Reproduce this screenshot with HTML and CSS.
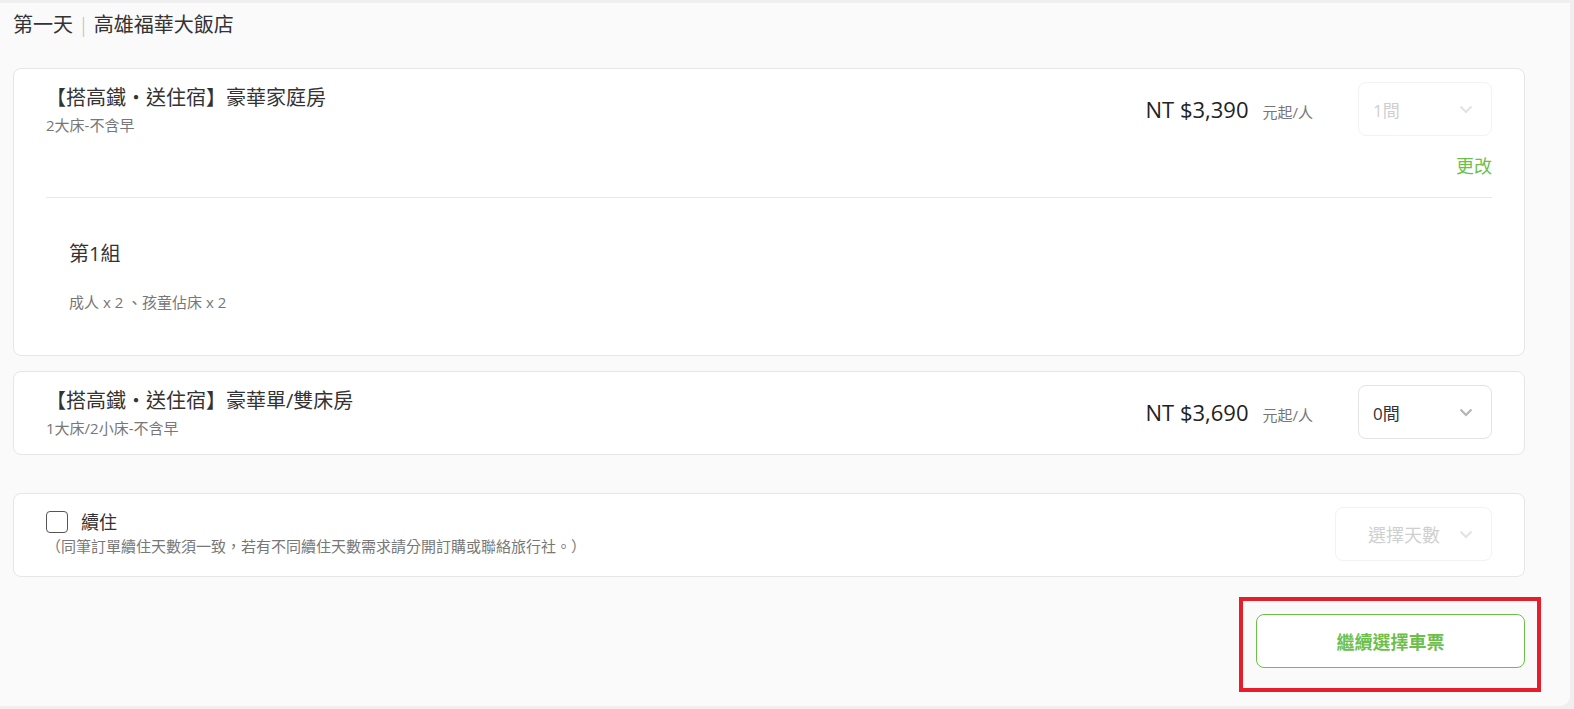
FILE: index.html
```html
<!DOCTYPE html>
<html lang="zh-Hant">
<head>
  <meta charset="UTF-8">
  <title>選擇住宿</title>
  <link rel="stylesheet" href="styles.css">
</head>
<body>

  <div class="panel">
    <!-- 標題 -->
    <h2 class="day-title">第一天<span class="sep">|</span>高雄福華大飯店</h2>

    <!-- 房型 1 -->
    <div class="card">
      <div class="room-row">
        <div class="room-info">
          <div class="room-name">【搭高鐵・送住宿】豪華家庭房</div>
          <div class="room-sub">2大床-不含早</div>
        </div>
        <div class="room-side">
          <span class="price">NT $3,390</span>
          <span class="unit">元起/人</span>
          <div class="select disabled">
            <span>1間</span>
            <svg class="chev" width="14" height="9" viewBox="0 0 14 9"><polyline points="1.5,1.5 7,7 12.5,1.5" fill="none" stroke="currentColor" stroke-width="2.2"/></svg>
          </div>
        </div>
      </div>
      <div class="change"><a href="#">更改</a></div>
      <hr class="divider">
      <div class="group">
        <div class="group-name">第1組</div>
        <div class="group-people">成人 x 2 、孩童佔床 x 2</div>
      </div>
    </div>

    <!-- 房型 2 -->
    <div class="card">
      <div class="room-row">
        <div class="room-info">
          <div class="room-name">【搭高鐵・送住宿】豪華單/雙床房</div>
          <div class="room-sub">1大床/2小床-不含早</div>
        </div>
        <div class="room-side">
          <span class="price">NT $3,690</span>
          <span class="unit">元起/人</span>
          <div class="select">
            <span>0間</span>
            <svg class="chev" width="14" height="9" viewBox="0 0 14 9"><polyline points="1.5,1.5 7,7 12.5,1.5" fill="none" stroke="currentColor" stroke-width="2.2"/></svg>
          </div>
        </div>
      </div>
    </div>

    <!-- 續住 -->
    <div class="card card-extend">
      <div class="room-row">
        <div class="room-info">
          <label class="check">
            <span class="box"></span>
            <span>續住</span>
          </label>
          <div class="note">（同筆訂單續住天數須一致，若有不同續住天數需求請分開訂購或聯絡旅行社。）</div>
        </div>
        <div class="select select-days disabled">
          <span>選擇天數</span>
          <svg class="chev" width="14" height="9" viewBox="0 0 14 9"><polyline points="1.5,1.5 7,7 12.5,1.5" fill="none" stroke="currentColor" stroke-width="2.2"/></svg>
        </div>
      </div>
    </div>

    <div class="actions">
      <div class="highlight">
        <button class="btn-next">繼續選擇車票</button>
      </div>
    </div>
  </div>

</body>
</html>
```

FILE: styles.css
```css
html, body {
  margin: 0;
  padding: 0;
  overflow: hidden;
}

body {
  background-color: #efefef;
  font-family: "Open Sans", "Noto Sans CJK TC", sans-serif;
  color: #333;
  padding-top: 3px;
}

.panel {
  margin-right: 4px;
  height: 703px;
  box-sizing: border-box;
  padding: 10px 45px 0 13px;
  background: #fafafa;
  border-radius: 0 0 10px 0;
}

.day-title {
  margin: 0 0 31px;
  font-size: 20px;
  font-weight: normal;
  line-height: 24px;
  color: #333;
}

.sep {
  color: #bbb;
  margin: 0 5px;
  font-weight: 300;
}

.card {
  background: #fff;
  border: 1px solid #e6e6e6;
  border-radius: 8px;
  padding: 13px 32px 15px 32px;
  margin-bottom: 15px;
}

.room-row {
  display: flex;
  justify-content: space-between;
  align-items: flex-start;
}

.room-info {
  padding-top: 3px;
}

.room-name {
  font-size: 20px;
  line-height: 26px;
}

.room-sub {
  font-size: 15px;
  line-height: 20px;
  color: #777;
  margin-top: 4px;
}

.room-side {
  display: flex;
  align-items: center;
}

.price {
  font-size: 22px;
  color: #222;
}

.unit {
  font-size: 15px;
  color: #777;
  margin-left: 14px;
  margin-right: 45px;
  padding-top: 4px;
}

.select {
  width: 134px;
  height: 54px;
  box-sizing: border-box;
  border: 1px solid #e3e3e3;
  border-radius: 8px;
  display: flex;
  align-items: center;
  justify-content: space-between;
  padding: 0 18px 0 14px;
  font-size: 17px;
  color: #333;
  background: #fff;
}

.select .chev {
  color: #b5b5b5;
}

.select.disabled {
  border-color: #f2f2f2;
  color: #cfcfcf;
}

.select.disabled .chev {
  color: #e3e3e3;
}

.change {
  text-align: right;
  margin-top: 19px;
  font-size: 18px;
  line-height: 22px;
}

.change a {
  color: #6cbf4b;
  text-decoration: none;
}

.divider {
  border: none;
  border-top: 1px solid #e8e8e8;
  margin: 20px 0 0;
}

.group {
  padding: 43px 23px 28px;
}

.group-name {
  font-size: 20px;
  line-height: 26px;
}

.group-people {
  font-size: 15px;
  line-height: 20px;
  color: #777;
  margin-top: 25px;
}

.card-extend {
  margin-top: 38px;
  margin-bottom: 0;
}

.check {
  display: flex;
  align-items: center;
  gap: 13px;
  font-size: 18px;
  line-height: 24px;
  color: #333;
}

.box {
  width: 20px;
  height: 20px;
  border: 1.5px solid #555;
  border-radius: 4px;
}

.note {
  font-size: 15px;
  line-height: 20px;
  color: #777;
  margin-top: 2px;
}

.select-days {
  width: 157px;
  padding-left: 32px;
  font-size: 18px;
}

.actions {
  display: flex;
  justify-content: flex-end;
  margin-top: 20px;
  margin-right: -16px;
}

.highlight {
  border: 4px solid #e61e2b;
  padding: 13px 12px 20px 13px;
}

.btn-next {
  width: 269px;
  height: 54px;
  background: #fff;
  border: 1px solid #6cbf4b;
  border-radius: 8px;
  color: #6cbf4b;
  font-family: "Open Sans", "Noto Sans CJK TC", sans-serif;
  font-size: 18px;
  font-weight: bold;
  cursor: pointer;
}
```
